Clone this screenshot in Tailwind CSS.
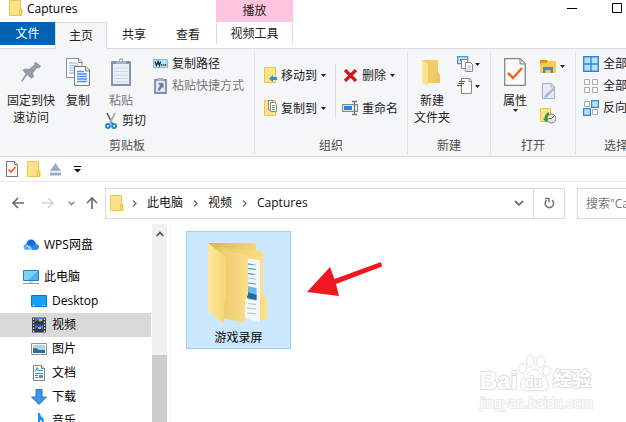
<!DOCTYPE html>
<html lang="zh-CN">
<head>
<meta charset="utf-8">
<title>Captures</title>
<script src="https://cdn.jsdelivr.net/npm/@tailwindcss/browser@4"></script>
</head>
<body class="flex h-screen flex-col overflow-hidden bg-white font-['Open_Sans','Noto_Sans_CJK_SC',sans-serif] text-xs text-[#222]">
<svg class="hidden">
  <symbol id="folder" viewBox="0 0 14 16"><path d="M.5.5h11v9h1.500v6H.5z" fill="#fee28a" stroke="#ecc650"/><path d="M10.500 15V9.500h2V15" fill="#fdd968" stroke="#ecc650"/></symbol>
  <symbol id="caret" viewBox="0 0 5 3"><path d="M0 0h5L2.500 3z" fill="#222"/></symbol>
  <symbol id="chev" viewBox="0 0 5 7"><path d="M1 .5 4 3.500 1 6.500" fill="none" stroke="#777" stroke-width="1.500"/></symbol>
  <symbol id="check" viewBox="0 0 22 28"><path d="M.7.7h15.500l5 5v21.600H.7z" fill="#fafafa" stroke="#858585" stroke-width="1.300"/><path d="M16 1v5h5" fill="#ddd" stroke="#858585"/><path d="m4 15 5 5 9-10" fill="none" stroke="#f2621f" stroke-width="2.500"/></symbol>
</svg>

<header class="shrink-0">
  <div class="flex h-[22px]">
    <div class="flex w-[216px] shrink-0 gap-1 pl-[9px]">
      <svg class="h-4 w-[14px]"><use href="#folder"/></svg>
      <h1 class="leading-[18px] text-black">Captures</h1>
    </div>
    <div class="w-[77px] shrink-0 bg-[#ffc5de] text-center leading-[22px]">播放</div>
    <div class="-mr-[14px] ml-auto flex h-4 shrink-0">
      <button aria-label="最小化" class="flex w-[45px] items-center justify-center"><svg class="h-3 w-[11px]" viewBox="0 0 11 12"><path d="M0 6.500h10" stroke="#000"/></svg></button>
      <button aria-label="最大化" class="flex w-[45px] items-center justify-center"><svg class="h-3 w-[11px]" viewBox="0 0 11 12"><path d="M.5 1.500h9v9h-9z" fill="none" stroke="#000"/></svg></button>
    </div>
  </div>
  <nav class="flex h-[27px] border-b border-[#dadbdc] leading-6">
    <button class="h-[23px] w-[55px] bg-[#0063b1] leading-[23px] text-white">文件</button>
    <button class="-mb-px w-[52px] border border-b-0 border-[#dadbdc] bg-[#f5f6f7]">主页</button>
    <button class="w-[54px]">共享</button>
    <button class="mr-px w-[54px]">查看</button>
    <button class="h-[22px] w-[77px] border-x border-[#dadbdc]">视频工具</button>
  </nav>
</header>

<section aria-label="功能区" class="flex h-[108px] shrink-0 overflow-hidden border-b border-[#dadbdc] bg-[#f5f6f7] py-0.5 leading-[17px]">
  <div class="flex w-[255px] shrink-0 flex-col border-r border-[#e2e3e4]">
    <div class="flex grow pt-[7px] pl-[7px]">
      <button class="mr-[11px] flex w-12 flex-col items-center gap-1.5">
        <svg class="h-7 w-5" viewBox="0 0 20 28"><path d="m15 4 5 4-2 2.500-2-.5-4 5 1 4-3 1.500L6.500 17 1 24l-1-1 4.500-7L1.500 12 4 10.500l4 .500 5.500-4.500L13 5z" fill="#929ca3"/></svg>
        <span>固定到快<br>速访问</span>
      </button>
      <button class="mr-[15px] flex w-6 flex-col items-center gap-1.5">
        <svg class="h-7 w-6" viewBox="0 0 24 28"><g stroke="#8b8f92" fill="#fcfcfc"><path d="M.5.500H13l3 3v16H.5z"/><path d="M12.500.5v4h4" fill="#ddd"/></g><path d="M3 5h8M3 7.500h10M3 10h10M3 12.500h10M3 15h10" stroke="#a9c9f8" stroke-width="1.300"/><g stroke="#75797d" fill="#fff"><path d="M8.500 8.500H20l3.500 3.500v15.500h-15z"/><path d="M19.500 8.500V13h4" fill="#ddd"/></g><path d="M11 13.500h7M11 16h10M11 18.500h10M11 21h10M11 23.500h10" stroke="#4a90ee" stroke-width="1.300"/></svg>
        <span>复制</span>
      </button>
      <div class="mr-[7px] flex w-[41px] shrink-0 flex-col gap-[3px]">
        <button class="flex w-8 flex-col items-center gap-1.5 text-[#777]">
          <svg class="h-7 w-5" viewBox="0 0 20 28"><rect y="3" width="20" height="25" rx="1" fill="#8492b2"/><path d="M2 6h16v20H2z" fill="#eaf0fa"/><path d="M3 10h14M3 13.500h14M3 17h14M3 20.500h14M3 24h14" stroke="#cbd7e8"/><path d="M5 6V3h3V1q2-2 4 0v2h3v3z" fill="#a7b1c5"/><circle cx="10" cy="2.500" r="1" fill="#f5f6f7"/></svg>
          <span>粘贴</span>
        </button>
        <button class="flex items-center gap-[5px]">
          <svg class="h-4 w-3 shrink-0" viewBox="0 0 12 16"><path d="M2 0 7.500 11" stroke="#59656e" stroke-width="1.600"/><path d="M10 0 4.500 11" stroke="#a9b3ba" stroke-width="1.800"/><g fill="none" stroke="#178bd0" stroke-width="1.900"><circle cx="2.900" cy="13" r="2"/><circle cx="9.100" cy="13" r="2"/></g></svg>
          <span>剪切</span>
        </button>
      </div>
      <div class="flex flex-col items-start gap-[5px] whitespace-nowrap">
        <button class="-mt-[3px] flex h-[17px] items-center gap-1"><svg class="h-[9px] w-[15px]" viewBox="0 0 15 9"><path d="M.5.5h14v8H.5z" fill="#b9e2fb" stroke="#7bbbe0"/><path d="m2 2.500 1.500 4 1.500-4 1.500 4 1-4" fill="none" stroke="#222" stroke-width="1.200"/><path d="M8 6h1.200M10 6h1.200M12 6h1.200" stroke="#222" stroke-width="1.300"/></svg>复制路径</button>
        <button class="flex h-[17px] items-center gap-1 text-[#777]"><svg class="h-4 w-[15px]" viewBox="0 0 15 16"><path d="M2 2h11v13H2z" fill="#dfe7f4" stroke="#7f8eac" stroke-width="1.800"/><path d="M4.500 0h6v3h-6z" fill="#a8b3c8"/><path d="M5 5h5.500v5.500L9 9l-2.500 4-2-1L7 7.500z" fill="#6c7d9e"/></svg>粘贴快捷方式</button>
      </div>
    </div>
    <h2 class="text-center text-[#505050]">剪贴板</h2>
  </div>

  <div class="flex w-[153px] shrink-0 flex-col border-r border-[#e2e3e4]">
    <div class="flex grow items-start pt-[13px] pl-[9px]">
      <div class="mr-2 flex h-[55px] w-[63px] flex-col justify-between py-px">
        <button class="flex h-5 items-center gap-1"><svg class="h-4 w-[13px]" viewBox="0 0 13 16"><path d="M.5.5h11v15H.5z" fill="#fee28a" stroke="#ecc650"/><path d="m5 11.500 4-3.500v2h4v3H9v2z" fill="#2e8fdf"/></svg><span class="whitespace-nowrap">移动到</span><svg class="h-[3px] w-[5px] shrink-0"><use href="#caret"/></svg></button>
        <button class="flex h-5 items-center gap-1"><svg class="h-4 w-[13px]" viewBox="0 0 13 16"><path d="M.5.5h11v15H.5z" fill="#fee28a" stroke="#ecc650"/><path d="M4.500.5H9v9.500H4.500z" fill="#fff" stroke="#888"/><path d="M6.500 2.500h4l2 2v7h-6z" fill="#fff" stroke="#888"/><path d="M8 5.500h3M8 7.500h3M8 9.500h3" stroke="#4a90ee"/></svg><span class="whitespace-nowrap">复制到</span><svg class="h-[3px] w-[5px] shrink-0"><use href="#caret"/></svg></button>
      </div>
      <div class="flex h-[55px] flex-col justify-between border-l border-[#dcdddf] py-px pl-1.5">
        <button class="flex h-5 items-center gap-1"><svg class="h-[13px] w-4" viewBox="0 0 16 13"><path d="m3 1 11 11m0-11L3 12" stroke="#d8131b" stroke-width="3.200"/></svg>删除<svg class="h-[3px] w-[5px]"><use href="#caret"/></svg></button>
        <button class="flex h-5 items-center gap-[3px]"><svg class="h-4 w-[17px]" viewBox="0 0 17 16"><path d="M.6 4.600h14.800v6.800H.6z" fill="#fff" stroke="#888" stroke-width="1.200"/><path d="M2 6h8v4H2z" fill="#2487dc"/><path d="M10 1.500h5M12.500 1v14M10 14.500h5" stroke="#777" stroke-width="1.400"/></svg>重命名</button>
      </div>
    </div>
    <h2 class="text-center text-[#505050]">组织</h2>
  </div>

  <div class="flex w-[83px] shrink-0 flex-col border-r border-[#e2e3e4]">
    <div class="flex grow items-start gap-[7px] pt-[7px] pl-1.5">
      <button class="flex w-9 flex-col items-center gap-1.5">
        <svg class="h-7 w-5" viewBox="0 0 20 28"><path d="M0 2h16v23H5z" fill="#f1cd66"/><path d="M14 14h2l2 3v8h-4z" fill="#e9c662"/><path d="m0 2 6 4v22l-6-3z" fill="#ffe391"/></svg>
        <span class="whitespace-nowrap">新建<br>文件夹</span>
      </button>
      <div class="-mt-0.5 flex flex-col gap-1.5">
        <button aria-label="新建项目" class="flex items-center gap-0.5"><svg class="h-4 w-4" viewBox="0 0 16 16"><path d="M.6.6h10v7H.6z" fill="#c5e8fb" stroke="#3f9ccc" stroke-width="1.200"/><path d="M3 3h5v2H3z" fill="#3d7c91"/><g fill="#fff" stroke="#888"><path d="M4.500 3.500h6v9h-6z"/><path d="M8.500 6.500h5l2 2v7h-7z"/></g><path d="M10 10h4M10 12h4M10 14h4" stroke="#a9bfda"/></svg><svg class="h-[3px] w-[5px]"><use href="#caret"/></svg></button>
        <button aria-label="轻松访问" class="flex items-center gap-0.5"><svg class="h-4 w-4" viewBox="0 0 16 16"><path d="M4.500.5h8l2 2v13h-10z" fill="#fff" stroke="#888"/><path d="M12 1v2.500h3" fill="none" stroke="#888"/><path d="M2 3.500h6M1 5.500h6M0 7.500h5" stroke="#176ba3" stroke-width="1.200"/></svg><svg class="h-[3px] w-[5px]"><use href="#caret"/></svg></button>
      </div>
    </div>
    <h2 class="text-center text-[#505050]">新建</h2>
  </div>

  <div class="flex w-[85px] shrink-0 flex-col border-r border-[#e2e3e4]">
    <div class="flex grow items-start gap-[13px] pt-[7px] pl-3">
      <button class="flex w-6 flex-col items-center">
        <svg class="mb-1.5 h-7 w-[22px]"><use href="#check"/></svg>
        <span>属性</span><svg class="h-[3px] w-[5px]"><use href="#caret"/></svg>
      </button>
      <div class="flex flex-col items-start gap-[9px]">
        <button aria-label="打开" class="flex items-center gap-1"><svg class="h-4 w-4" viewBox="0 0 16 16"><path d="M0 2h7l1 1h8v12H0z" fill="#fccb4a"/><path d="M0 2h7v3H0z" fill="#d99700"/><path d="M3 9h10v6h-2.500v-3h-5v3H3z" fill="#3293dd"/></svg><svg class="h-[3px] w-[5px]"><use href="#caret"/></svg></button>
        <button aria-label="编辑" ><svg class="h-4 w-4" viewBox="0 0 16 16"><path d="M2.500.5h9l3 3v12h-12z" fill="#e6edf8" stroke="#a3b1cd"/><path d="M11 1v3h3" fill="none" stroke="#a3b1cd"/><path d="m5 12 9-8 1 2-8 8-3 1z" fill="#a9b8d4"/></svg></button>
        <button aria-label="历史记录"><svg class="h-4 w-4" viewBox="0 0 16 16"><path d="M.5.5h10v13H.5z" fill="#fee28a" stroke="#ecc650"/><circle cx="11.500" cy="10.500" r="4.500" fill="#e3e3e3" stroke="#7b7b7b"/><path d="M11.500 10.500 14 8M11.500 10.500H9" stroke="#555"/><path d="M9 4v2.500q-2 1-2 4h2l-3 4-3-4h1.500q0-5 4.500-6.500z" fill="#23a632"/></svg></button>
      </div>
    </div>
    <h2 class="text-center text-[#505050]">打开</h2>
  </div>

  <div class="flex w-20 shrink-0 flex-col">
    <div class="flex grow flex-col items-start gap-[5px] pt-1 pl-[7px] whitespace-nowrap">
      <button class="flex h-[17px] items-center gap-1"><svg class="h-4 w-4" viewBox="0 0 16 16"><path d="M.7.7h14.600v14.600H.7z" fill="#b7e0fb" stroke="#3189d2" stroke-width="1.400"/><path d="M8 0v16M0 8h16" stroke="#3189d2" stroke-width="1.400"/></svg>全部选择</button>
      <button class="flex h-[17px] items-center gap-1"><svg class="h-4 w-4" viewBox="0 0 16 16"><path d="M1.500 1.500h5v5h-5zM9.500 1.500h5v5h-5zM1.500 9.500h5v5h-5zM9.500 9.500h5v5h-5z" fill="#fff" stroke="#aaa"/></svg>全部取消</button>
      <button class="flex h-[17px] items-center gap-1"><svg class="h-4 w-4" viewBox="0 0 16 16"><path d="M1.500 1.500h5v5h-5zM9.500 9.500h5v5h-5z" fill="#fff" stroke="#aaa"/><path d="M8.600.6h6.800v6.800H8.600zM.6 8.600h6.800v6.800H.6z" fill="#b7e0fb" stroke="#3189d2" stroke-width="1.200"/></svg>反向选择</button>
    </div>
    <h2 class="text-center text-[#505050]">选择</h2>
  </div>
</section>

<div class="flex h-[25px] shrink-0 items-center gap-[9px] border-b border-[#e8e8e8] pl-1.5">
  <button aria-label="属性"><svg class="h-4 w-3" viewBox="0 0 12 16"><path d="M.5.500h8l3 3v12H.5z" fill="#f7f7f7" stroke="#777"/><path d="M8.500.5v3h3" fill="#ddd" stroke="#777"/><path d="m2.500 8.500 2.500 2.500 4.500-5" fill="none" stroke="#f2621f" stroke-width="1.600"/></svg></button>
  <button aria-label="新建文件夹"><svg class="h-4 w-[14px]"><use href="#folder"/></svg></button>
  <button aria-label="弹出"><svg class="h-[13px] w-[11px]" viewBox="0 0 11 13"><path d="M5.500 0 11 8H0zM0 9.500h11v3H0z" fill="#9ba8c6"/></svg></button>
  <button aria-label="自定义快速访问工具栏" class="ml-1"><svg class="h-[7px] w-[7px]" viewBox="0 0 7 7"><path d="M0 .5h7" stroke="#000"/><path d="M0 3h7L3.500 6.500z" fill="#000"/></svg></button>
</div>

<div class="flex h-[42px] shrink-0 items-center">
  <div class="flex w-[105px] shrink-0 items-center pl-3">
    <button aria-label="后退"><svg class="h-3 w-3" viewBox="0 0 12 12"><path d="M12 6H1M6 1 1 6l5 5" fill="none" stroke="#6d6d6d" stroke-width="1.700"/></svg></button>
    <button aria-label="前进" class="ml-[18px]"><svg class="h-3 w-3" viewBox="0 0 12 12"><path d="M0 6h11M6 1l5 5-5 5" fill="none" stroke="#d4d4d4" stroke-width="1.700"/></svg></button>
    <button aria-label="最近浏览的位置" class="ml-[14px]"><svg class="h-[5px] w-[7px]" viewBox="0 0 7 5"><path d="m.7.8 2.800 2.800L6.300.8" fill="none" stroke="#888" stroke-width="1.500"/></svg></button>
    <button aria-label="上移" class="ml-[11px]"><svg class="h-3 w-3" viewBox="0 0 12 12"><path d="M6 12V1M1 6l5-5 5 5" fill="none" stroke="#6d6d6d" stroke-width="1.700"/></svg></button>
  </div>
  <div class="mr-3 flex h-[31px] grow items-center border border-[#d9d9d9] pl-1 text-[#111]">
    <svg class="mr-2 h-4 w-[14px]"><use href="#folder"/></svg>
    <svg class="mr-[10px] h-[7px] w-[5px]"><use href="#chev"/></svg>
    <a href="#pc">此电脑</a>
    <svg class="mx-[10px] h-[7px] w-[5px]"><use href="#chev"/></svg>
    <a href="#video">视频</a>
    <svg class="mx-[10px] h-[7px] w-[5px]"><use href="#chev"/></svg>
    <a href="#captures">Captures</a>
    <button aria-label="历史地址" class="mr-[9px] ml-auto"><svg class="h-1.5 w-[10px]" viewBox="0 0 10 6"><path d="m1 1 4 4 4-4" fill="none" stroke="#777" stroke-width="1.900"/></svg></button>
    <button aria-label="刷新" class="flex h-full w-[31px] items-center justify-center border-l border-[#d9d9d9]"><svg class="h-3 w-[11px]" viewBox="0 0 11 12"><path d="M2.700 3.200a4.200 4.200 0 1 0 5.300 0" fill="none" stroke="#777" stroke-width="1.600"/><path d="M1 1.500h4v4" fill="none" stroke="#777" stroke-width="1.500"/></svg></button>
  </div>
  <div class="h-[31px] w-[49px] shrink-0 overflow-hidden border border-r-0 border-[#d9d9d9]">
    <input type="text" aria-label="搜索" placeholder="搜索&quot;Captures&quot;" class="h-full w-40 pl-2 outline-none placeholder:text-[#777]">
  </div>
</div>

<div class="flex min-h-0 grow">
  <nav class="w-[151px] shrink-0 overflow-hidden pt-[9px] text-black">
    <a href="#wps" class="mb-2 flex h-6 items-center gap-1 pl-[23px]"><svg class="h-4 w-[17px]" viewBox="0 0 17 16"><path d="M3 13a3.200 3.200 0 0 1-.2-6.200h3L9 9l-4 4z" fill="#5aaef8"/><path d="M3.500 7Q4 2.500 8 2.500t5 4.500L9 10z" fill="#1668e3"/><path d="M8 13l-2-1 5-4.200q1.800-1.400 3.600-.4a3.100 3.100 0 0 1-1.100 5.600z" fill="#2f86f2"/><path d="m4 8.500 5.500 4.500" stroke="#fff" stroke-width=".8"/></svg>WPS网盘</a>
    <a href="#pc" class="flex h-6 items-center gap-[5px] pl-[23px]"><svg class="h-4 w-4" viewBox="0 0 16 16"><path d="M.5 1.500h15v10H.5z" fill="#43b8f4" stroke="#347fa5"/><path d="M1 2h14L5 11H1z" fill="#7bd2fb"/><path d="M6 12h4v2H6z" fill="#cdd4da"/><path d="M0 14.500h16" stroke="#8c9ba6"/></svg>此电脑</a>
    <a href="#desktop" class="flex h-6 items-center gap-[5px] pl-[31px]"><svg class="h-3 w-4" viewBox="0 0 16 12"><path d="M.5.5h15v11H.5z" fill="#18a0fb" stroke="#0877c7"/><path d="M2 10.500h1.500M11 10.500h1M13 10.500h1" stroke="#fff"/></svg>Desktop</a>
    <a href="#video" aria-current="page" class="flex h-6 items-center gap-[5px] bg-[#d9d9d9] pl-[31px]"><svg class="h-4 w-4" viewBox="0 0 16 16"><path d="M1 .5h14v15H1z" fill="#353535"/><path d="M4 1h8v6.500H4zM4 8.500h8V15H4z" fill="#3c7de0"/><path d="m4 5 3-2 2 2 3-2v4.500H4zM4 12l4-3 4 4v2H4z" fill="#22386a"/><path d="M8 2h3v2H8zM7 10h3v2H7z" fill="#e9b52e"/><path d="M2.500 1.500v14M13.500 1.500v14" stroke="#fff" stroke-width="1.300" stroke-dasharray="1.500 1.500"/></svg>视频</a>
    <a href="#pictures" class="flex h-6 items-center gap-[5px] pl-[31px]"><svg class="h-3 w-4" viewBox="0 0 16 12"><path d="M.5.500h15v11H.5z" fill="#fff" stroke="#919191"/><path d="M2 2h12v8H2z" fill="#a8d6f5"/><path d="M2 5q5 0 6 2h6v3H2z" fill="#396f7e"/><path d="M2 9h12v1H2z" fill="#2471aa"/></svg>图片</a>
    <a href="#documents" class="flex h-6 items-center gap-[5px] pl-[31px]"><svg class="h-4 w-4" viewBox="0 0 16 16"><path d="M2.500.5h8l3 3v12h-11z" fill="#fff" stroke="#838383"/><path d="M10.500.5v3h3" fill="#ddd" stroke="#838383"/><path d="m4.500 6.500 1.500-4 1.500 4M8 5.500h4M4 8.500h8M4 10.500h3M4 12.500h3" fill="none" stroke="#2f8cc7"/><path d="M8 10h4v3H8z" fill="#4f91b4"/></svg>文档</a>
    <a href="#downloads" class="flex h-6 items-center gap-[5px] pl-[31px]"><svg class="h-4 w-4" viewBox="0 0 16 16"><path d="M5 .5h6V8h4.500L8 15.500.5 8H5z" fill="#3a97e8" stroke="#2a78c0"/></svg>下载</a>
    <a href="#music" class="flex h-6 items-center gap-[5px] pl-[31px]"><svg class="h-4 w-4" viewBox="0 0 16 16"><path d="M7 0h2q0 3 2.500 4.500T12 11q0-3-3-4v5q0 3-3 3t-3-2 4-3z" fill="#1296f3"/></svg>音乐</a>
  </nav>
  <div class="ml-px flex w-[15px] shrink-0 flex-col bg-[#f0f0f0]">
    <button aria-label="向上滚动" class="flex h-5 items-center justify-center"><svg class="h-1.5 w-2" viewBox="0 0 8 6"><path d="m.8 5 3.200-3.500L7.200 5" fill="none" stroke="#505050" stroke-width="1.800"/></svg></button>
    <div class="mt-[111px] grow bg-[#cdcdcd]"></div>
  </div>
  <main class="relative ml-[3px] grow border-l border-[#f3f3f3] pt-[7px] pl-[15px]">
    <a href="#recordings" class="flex w-[105px] flex-col items-center border border-[#99d1ff] bg-[#cce8ff] pt-[10px] leading-5 text-black">
      <svg class="h-[86px] w-[62px]" viewBox="0 0 62 86">
        <defs>
          <linearGradient id="back"><stop stop-color="#d8b64f"/><stop offset="1" stop-color="#f5d67b"/></linearGradient>
          <linearGradient id="front"><stop stop-color="#ffe79c"/><stop offset="1" stop-color="#f6d477"/></linearGradient>
          <linearGradient id="mid"><stop stop-color="#e8c665"/><stop offset="1" stop-color="#fddf89"/></linearGradient>
        </defs>
        <path d="M0 1h46q2 0 2 2v58H8z" fill="url(#back)"/>
        <path d="M9 5l44 4q2 0 2 2v41l4 5v19l-2 2-14-1z" fill="url(#mid)"/>
        <path d="m37 16 15 2v62l-15-4z" fill="#f4f6f8"/>
        <path d="M40 22l8 1M40 26.500l8 1M40 31.500l8 1M40 36l8 1M40 57l8 1M40 61.500l8 1M39 66l9 1M39 71l9 1" stroke="#b7bfc6"/>
        <path d="M40 22l5 .6M40 26.500l8 1M40 31.500l6 1M40 41l8 1" stroke="#32a0d8"/>
        <path d="m39 44 9.500 2v12L39 56z" fill="#68b9e8"/><path d="m39 50 9.500 3v5L39 56z" fill="#286899"/>
        <path d="m9 5 29 8q2 1 2 3v37l-3 5v20q0 3-3 2.500L15 76z" fill="url(#mid)"/>
        <path d="M0 1l17 13q1 1 1 3v40l-2 5v20L0 69z" fill="url(#front)"/>
      </svg>
      <span>游戏录屏</span>
    </a>
    <svg class="absolute top-[38px] left-[136px] h-[36px] w-[76px]" viewBox="0 0 76 36"><path d="M0 30 23 5l4.500 12L74 0l1 4.500L29 22l3 12z" fill="#ed1820"/></svg>
    <div class="absolute top-[130px] left-[309px] w-[120px] font-['Liberation_Sans','Noto_Sans_CJK_SC',sans-serif] font-bold whitespace-nowrap text-white">
      <svg class="absolute top-0 left-[37px] h-[39px] w-[34px]" viewBox="0 0 34 39" fill="#fff" stroke="#e0e0e0"><ellipse cx="5.500" cy="14.500" rx="4" ry="5"/><ellipse cx="13.500" cy="7" rx="4" ry="6"/><ellipse cx="23.500" cy="7.500" rx="4" ry="6"/><ellipse cx="29.500" cy="17" rx="3.800" ry="5"/><path d="M17.500 15q3.500 0 7 5c3 4 7 6 7 11q0 6-6 6-8-1-16 0-6 0-6-6c0-5 4-7 7-11q3.500-5 7-5z"/></svg>
      <div class="relative flex h-10 items-end leading-6 [paint-order:stroke_fill] [-webkit-text-stroke:2px_#e0e0e0]">
        <span class="w-[45px] text-2xl leading-[26px]">Bai</span><span class="w-7 pb-1 text-sm leading-4">du</span><span class="text-[19px] leading-7">经验</span>
      </div>
      <div class="text-sm leading-[18px] font-normal [paint-order:stroke_fill] [-webkit-text-stroke:2px_#eaeaea]">jingyan.baidu.com</div>
    </div>
  </main>
</div>
</body>
</html>
